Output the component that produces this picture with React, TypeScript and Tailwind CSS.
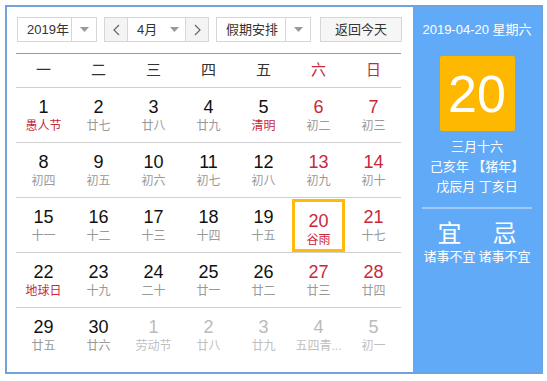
const FONT = '"Liberation Sans", "Noto Sans CJK SC", sans-serif';

type Day = { n: number; sub: string; red?: boolean; subRed?: boolean; other?: boolean; today?: boolean };

const weeks: Day[][] = [
  [
    { n: 1, sub: '愚人节', subRed: true },
    { n: 2, sub: '廿七' },
    { n: 3, sub: '廿八' },
    { n: 4, sub: '廿九' },
    { n: 5, sub: '清明', subRed: true },
    { n: 6, sub: '初二', red: true },
    { n: 7, sub: '初三', red: true },
  ],
  [
    { n: 8, sub: '初四' },
    { n: 9, sub: '初五' },
    { n: 10, sub: '初六' },
    { n: 11, sub: '初七' },
    { n: 12, sub: '初八' },
    { n: 13, sub: '初九', red: true },
    { n: 14, sub: '初十', red: true },
  ],
  [
    { n: 15, sub: '十一' },
    { n: 16, sub: '十二' },
    { n: 17, sub: '十三' },
    { n: 18, sub: '十四' },
    { n: 19, sub: '十五' },
    { n: 20, sub: '谷雨', red: true, subRed: true, today: true },
    { n: 21, sub: '十七', red: true },
  ],
  [
    { n: 22, sub: '地球日', subRed: true },
    { n: 23, sub: '十九' },
    { n: 24, sub: '二十' },
    { n: 25, sub: '廿一' },
    { n: 26, sub: '廿二' },
    { n: 27, sub: '廿三', red: true },
    { n: 28, sub: '廿四', red: true },
  ],
  [
    { n: 29, sub: '廿五' },
    { n: 30, sub: '廿六' },
    { n: 1, sub: '劳动节', other: true },
    { n: 2, sub: '廿八', other: true },
    { n: 3, sub: '廿九', other: true },
    { n: 4, sub: '五四青...', other: true },
    { n: 5, sub: '初一', other: true },
  ],
];

const weekdays = ['一', '二', '三', '四', '五', '六', '日'];

const Caret = () => (
  <svg width="9" height="5" viewBox="0 0 9 5">
    <path d="M0 0 L9 0 L4.5 5 Z" fill="#999" />
  </svg>
);

const Chevron = ({ dir }: { dir: 'l' | 'r' }) => (
  <svg width="7" height="12" viewBox="0 0 7 12">
    <path d={dir === 'l' ? 'M6 1 L1 6 L6 11' : 'M1 1 L6 6 L1 11'} fill="none" stroke="#666" strokeWidth="1.2" />
  </svg>
);

function DayCell({ d, last }: { d: Day; last: boolean }) {
  const numColor = d.other ? 'text-[#bbbbbb]' : d.red ? 'text-[#c9283a]' : 'text-[#111]';
  const subColor = d.other ? 'text-[#c0c0c0]' : d.subRed ? 'text-[#c9283a]' : 'text-[#999]';
  return (
    <div className={`h-[55px] flex items-stretch justify-center ${last ? '' : 'border-b border-[#d0d0d0]'}`}>
      <div
        className={`w-full flex flex-col items-center pt-[9px] ${
          d.today ? 'border-[3px] border-[#ffb90f] mx-[1px] mt-[1px] pt-[6px]' : ''
        }`}
      >
        <span className={`text-[18px] leading-[20px] ${numColor}`}>{d.n}</span>
        <span className={`text-[12px] leading-[18px] ${subColor}`}>{d.sub}</span>
      </div>
    </div>
  );
}

export default function App() {
  return (
    <div className="w-[547px] h-[381px] bg-white pt-[5px] pl-[5px]" style={{ fontFamily: FONT }}>
      <div className="w-[538px] h-[369px] border-2 border-[#6fa3de] flex">
        <div className="w-[406px] pl-[10px] pt-[10px]">
          <div className="flex items-center h-[25px] text-[13px] text-[#333]">
            <div className="w-[80px] h-[25px] border border-[#d6d6d6] flex">
              <div className="flex-1 flex items-center pl-[9px]">2019年</div>
              <div className="w-[25px] border-l border-[#d6d6d6] flex items-center justify-center">
                <Caret />
              </div>
            </div>
            <div className="w-[105px] h-[25px] border border-[#d6d6d6] flex ml-[7px]">
              <div className="w-[23px] bg-[#f4f4f4] border-r border-[#d6d6d6] flex items-center justify-center">
                <Chevron dir="l" />
              </div>
              <div className="flex-1 flex items-center pl-[9px] gap-[13px]">
                4月
                <Caret />
              </div>
              <div className="w-[23px] bg-[#f4f4f4] border-l border-[#d6d6d6] flex items-center justify-center">
                <Chevron dir="r" />
              </div>
            </div>
            <div className="w-[95px] h-[25px] border border-[#d6d6d6] flex ml-[7px]">
              <div className="flex-1 flex items-center pl-[9px]">假期安排</div>
              <div className="w-[25px] border-l border-[#d6d6d6] flex items-center justify-center">
                <Caret />
              </div>
            </div>
            <div className="w-[82px] h-[25px] border border-[#d6d6d6] bg-[#f6f6f6] ml-[9px] flex items-center justify-center">
              返回今天
            </div>
          </div>
          <div className="w-[385px] -ml-[1px] mt-[11px] border-t-[1.5px] border-[#6aa2e0]">
            <div className="grid grid-cols-7 h-[34px] border-b border-[#d0d0d0] items-center text-[15px]">
              {weekdays.map((w, i) => (
                <div key={w} className={`text-center ${i >= 5 ? 'text-[#c9283a]' : 'text-[#333]'}`}>
                  {w}
                </div>
              ))}
            </div>
            {weeks.map((wk, i) => (
              <div key={i} className="grid grid-cols-7">
                {wk.map((d, j) => (
                  <DayCell key={j} d={d} last={i === weeks.length - 1} />
                ))}
              </div>
            ))}
          </div>
        </div>
        <div className="flex-1 bg-[#61aaf7] flex flex-col items-center text-white">
          <div className="mt-[15px] text-[13px] leading-[16px]">2019-04-20 星期六</div>
          <div className="mt-[18px] w-[75px] h-[75px] bg-[#ffb800] rounded-[2px] flex items-center justify-center text-[52px] leading-none">
            20
          </div>
          <div className="mt-[6px] text-[13px] leading-[20px] text-center">
            <div>三月十六</div>
            <div>己亥年 【猪年】</div>
            <div>戊辰月 丁亥日</div>
          </div>
          <div className="mt-[10px] w-[110px] border-t-2 border-[#9fcbf9]" />
          <div className="mt-[11px] flex gap-[31px] text-[24px] leading-[28px]">
            <span>宜</span>
            <span>忌</span>
          </div>
          <div className="mt-[1px] flex gap-[3px] text-[13px] leading-[16px]">
            <span>诸事不宜</span>
            <span>诸事不宜</span>
          </div>
        </div>
      </div>
    </div>
  );
}
